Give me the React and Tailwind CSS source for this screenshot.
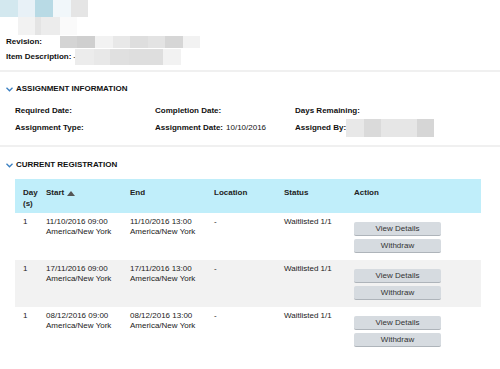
import React from 'react'

const font = { fontFamily: '"Liberation Sans", Arial, sans-serif' }

const rows = [
  { start: '11/10/2016 09:00', end: '11/10/2016 13:00', bg: 'bg-white' },
  { start: '17/11/2016 09:00', end: '17/11/2016 13:00', bg: 'bg-[#f2f2f2]' },
  { start: '08/12/2016 09:00', end: '08/12/2016 13:00', bg: 'bg-white' },
]

const Chevron = () => (
  <svg width="7" height="5" viewBox="0 0 7 5" className="mr-[3px]">
    <path d="M0.5 0.8 L3.5 3.8 L6.5 0.8" fill="none" stroke="#3a7fc1" strokeWidth="1.3" />
  </svg>
)

const SectionHeader = ({ title }) => (
  <div className="flex items-center h-4 pl-[6px]">
    <Chevron />
    <span className="font-bold text-[8px] uppercase text-[#111]">{title}</span>
  </div>
)

const Blur = ({ w, c }) => <div className="h-full" style={{ width: w, background: c }} />

const Btn = ({ children }) => (
  <button className="w-[87px] h-[14px] rounded-[2px] bg-[#d6dbe0] border-b border-[#aeb4ba] text-[8px] text-[#333] leading-[13px]">
    {children}
  </button>
)

const cols = 'grid grid-cols-[23px_84px_84px_70px_70px_135px]'

export default function App() {
  return (
    <div className="w-[500px] h-[369px] bg-white text-[#111] overflow-hidden" style={font}>
      {/* pixelated header */}
      <div className="flex h-[17px]">
        <Blur w={18} c="#d3e8ef" />
        <Blur w={17} c="#e8f1f7" />
        <Blur w={18} c="#b8dae5" />
        <Blur w={18} c="#f1f7fa" />
        <Blur w={17} c="#e5e5e5" />
      </div>
      <div className="flex h-[18px] pl-[18px]">
        <Blur w={17} c="#f2f2f2" />
        <Blur w={6} c="#e4e4e4" />
        <Blur w={19} c="#ececec" />
        <Blur w={17} c="#fafafa" />
      </div>
      <div className="flex items-center h-[14px] pl-[6px]">
        <span className="font-bold text-[8px] w-[54px]">Revision:</span>
        <div className="flex h-[12px]">
          <Blur w={17} c="#d4d4d4" />
          <Blur w={18} c="#cfcfcf" />
          <Blur w={18} c="#f2f2f2" />
          <Blur w={17} c="#e8e8e8" />
          <Blur w={18} c="#dedede" />
          <Blur w={17} c="#e3e3e3" />
          <Blur w={18} c="#d6d6d6" />
          <Blur w={17} c="#f2f2f2" />
        </div>
      </div>
      <div className="flex items-center h-[16px] pl-[6px]">
        <span className="font-bold text-[8px]">Item Description:</span>
        <span className="text-[8px] ml-[2px] w-[2px] overflow-hidden">-</span>
        <div className="flex h-[16px]">
          <Blur w={19} c="#ececec" />
          <Blur w={16} c="#e8e8e8" />
          <Blur w={19} c="#e0e0e0" />
          <Blur w={34} c="#dedede" />
          <Blur w={18} c="#f2f2f2" />
        </div>
      </div>
      <div className="mt-[5px] h-[2px] bg-[#f0f0f0]" />

      <div className="mt-[9px]">
        <SectionHeader title="Assignment Information" />
      </div>
      <div className="grid grid-cols-[140px_140px_140px] pl-[15px] mt-[5px] text-[8px]">
        <div className="h-[17px] flex items-center font-bold">Required Date:</div>
        <div className="h-[17px] flex items-center font-bold">Completion Date:</div>
        <div className="h-[17px] flex items-center font-bold">Days Remaining:</div>
        <div className="h-[17px] flex items-center font-bold">Assignment Type:</div>
        <div className="h-[17px] flex items-center">
          <span className="font-bold">Assignment Date:</span>
          <span className="ml-[3px]">10/10/2016</span>
        </div>
        <div className="h-[17px] flex items-center">
          <span className="font-bold">Assigned By:</span>
          <div className="flex h-[18px]">
            <Blur w={18} c="#e8e8e8" />
            <Blur w={17} c="#dadada" />
            <Blur w={36} c="#e6e6e6" />
            <Blur w={17} c="#d6d6d6" />
          </div>
        </div>
      </div>
      <div className="mt-[9px] h-[2px] bg-[#f0f0f0]" />

      <div className="mt-[10px]">
        <SectionHeader title="Current Registration" />
      </div>

      <div className="ml-[15px] w-[466px] mt-[6px] text-[8px] leading-[10px]">
        <div className={`${cols} bg-[#c0eefa] h-[34px] pt-[9px] leading-[10.5px] font-bold text-[#222]`}>
          <div className="pl-[8px]">Day (s)</div>
          <div className="pl-[8px] flex items-start">
            Start
            <svg width="8" height="5" viewBox="0 0 8 5" className="ml-[3px] mt-[3px]">
              <path d="M0 5 L4 0 L8 5 Z" fill="#555" />
            </svg>
          </div>
          <div className="pl-[8px]">End</div>
          <div className="pl-[8px]">Location</div>
          <div className="pl-[8px]">Status</div>
          <div className="pl-[8px]">Action</div>
        </div>
        {rows.map((r, i) => (
          <div key={i} className={`${cols} ${r.bg} h-[47px] pt-[4px] text-[#222]`}>
            <div className="pl-[8px]">1</div>
            <div className="pl-[8px]">
              {r.start}
              <br />
              America/New York
            </div>
            <div className="pl-[8px]">
              {r.end}
              <br />
              America/New York
            </div>
            <div className="pl-[8px]">-</div>
            <div className="pl-[8px]">Waitlisted 1/1</div>
            <div className="pl-[8px] pt-[5px] flex flex-col gap-[3px]">
              <Btn>View Details</Btn>
              <Btn>Withdraw</Btn>
            </div>
          </div>
        ))}
      </div>
    </div>
  )
}
